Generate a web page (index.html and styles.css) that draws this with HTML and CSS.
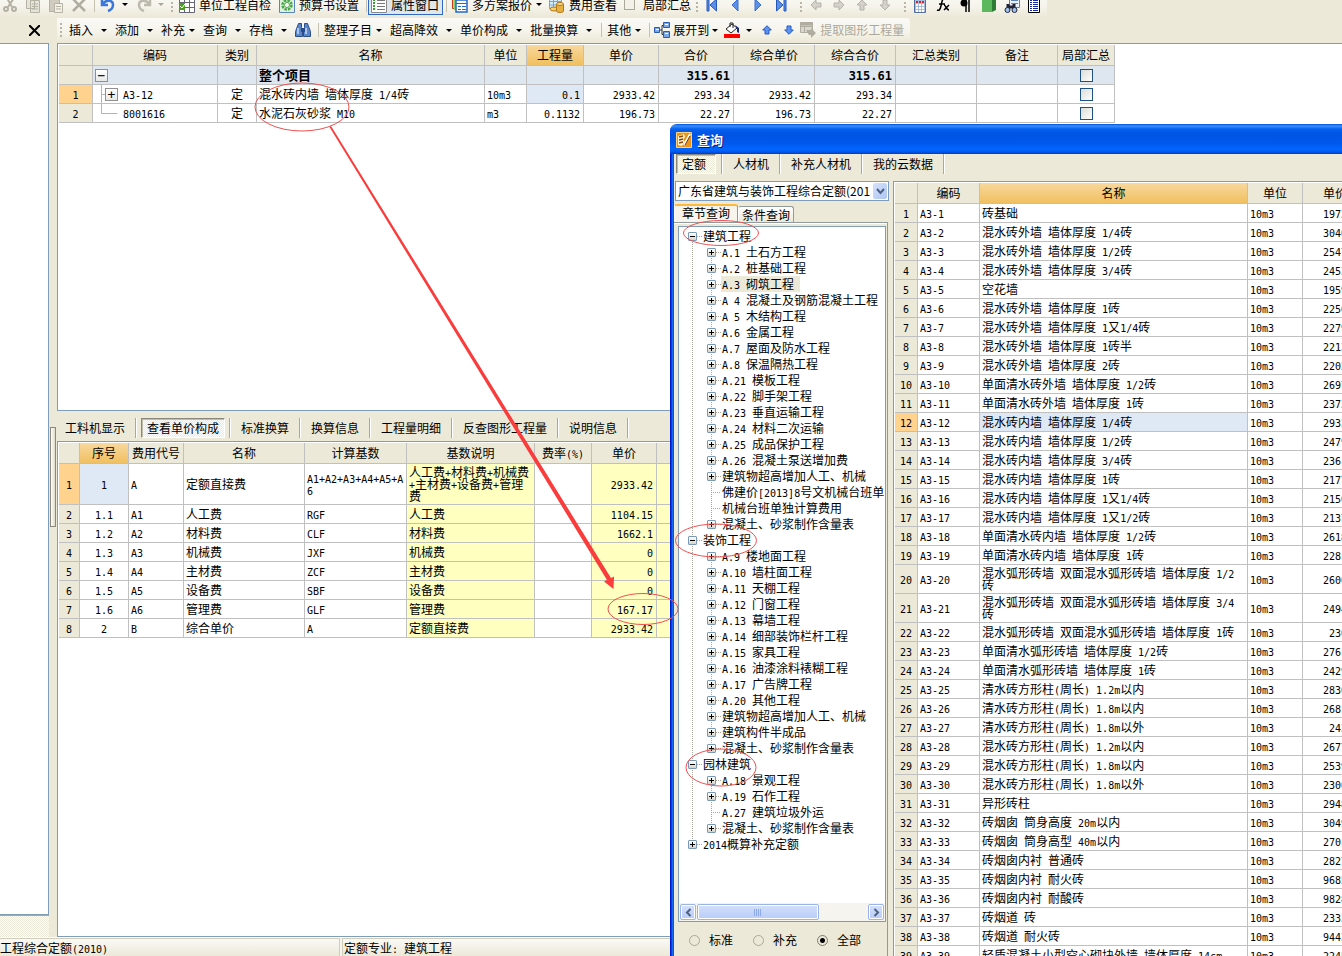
FILE: index.html
```html
<!DOCTYPE html>
<html lang="zh-CN">
<head>
<meta charset="utf-8">
<title>工程计价</title>
<link rel="stylesheet" href="styles.css">
</head>
<body>
<header class="topbar">
  <div class="strip strip-top">
    <div class="group group-edit">
      <button class="tb" aria-label="剪切"><svg width="16" height="16" viewBox="0 0 16 16" fill="none" stroke="#b5b2a4" stroke-width="2"><path d="M5 1l5 9M12 1L6 10"/><circle cx="4" cy="12" r="2"/><circle cx="12" cy="12" r="2"/></svg></button>
      <button class="tb" aria-label="复制"><svg width="16" height="16" viewBox="0 0 16 16" fill="#e6e4da" stroke="#b5b2a4"><path d="M1.500 .5h8v11h-8zM5.500 3.500h9v12h-9zM7 7h6M7 9.500h6M7 12h6"/></svg></button>
      <button class="tb" aria-label="粘贴"><svg width="16" height="16" viewBox="0 0 16 16" fill="#cfccbf" stroke="#b5b2a4"><path d="M1.500 1.500h10v13h-10z"/><path fill="#f2f0e8" d="M6.500 6.500h8v9h-8zM8 9.500h5M8 12h5"/></svg></button>
      <button class="tb" aria-label="删除"><svg width="16" height="16" viewBox="0 0 16 16" stroke="#b0ada0" stroke-width="2.500"><path d="M2 2l12 12M14 2L2 14"/></svg></button>
    </div>
    <i class="sep"></i>
    <div class="group group-undo">
      <button class="tb drop-wide" aria-label="撤销"><svg width="16" height="16" viewBox="0 0 16 16" fill="none" stroke="#3a78dc" stroke-width="2.500"><path d="M2 2v6h6M3 7c3-5 10-4 10 1 0 3-2 5-5 6"/></svg><i class="arr"></i></button>
      <button class="tb drop-wide dim" aria-label="重做"><svg width="16" height="16" viewBox="0 0 16 16" fill="none" stroke="#bdbaae" stroke-width="2.500"><path d="M14 2v6H8M13 7C10 2 3 3 3 8c0 3 2 5 5 6"/></svg><i class="arr"></i></button>
    </div>
    <i class="grip"></i>
    <div class="group group-project">
      <button class="tb"><svg width="16" height="16" viewBox="0 0 16 16"><path fill="#fff" stroke="#667" d="M.5.500h15v15H.5zM.5 5.500h15M.5 10.500h15M5.500.500v15M10.500.500v15"/><path fill="#4aa018" d="M0 6h6v7H0z"/><path d="M1 9l2 2 3-4" fill="none" stroke="#fff"/></svg>单位工程自检</button>
      <button class="tb"><svg width="16" height="16" viewBox="0 0 16 16"><path fill="#dff0dc" stroke="#5a86c0" d="M.5.500h15v15H.5z"/><circle cx="8" cy="8" r="4.500" fill="none" stroke="#4aa648" stroke-width="2.500" stroke-dasharray="2.500 1"/><circle cx="8" cy="8" r="2.500" fill="#fff" stroke="#4aa648"/></svg>预算书设置</button>
    </div>
    <i class="sep"></i>
    <button class="tb pressed-blue"><svg width="16" height="16" viewBox="0 0 16 16"><path fill="#fff" stroke="#888" d="M.5.500h15v15H.5z"/><path stroke="#35a035" stroke-width="2" stroke-dasharray="2 1" d="M3 2v12"/><path stroke="#777" d="M6 3.500h8M6 6.500h8M6 9.500h8M6 12.500h8"/></svg>属性窗口</button>
    <i class="sep"></i>
    <div class="group group-quote">
      <button class="tb drop-mid"><svg width="16" height="16" viewBox="0 0 16 16"><path fill="#f4c22c" stroke="#d23a1c" d="M.5.500h9v11h-9z"/><path fill="#7cd070" d="M2 2h9v11H2z"/><path fill="#fff" stroke="#2468c8" stroke-width="1.500" d="M4 3h11v12H4z"/><path stroke="#2468c8" d="M4 6.500h11M6 9.500h3M10 9.500h4M6 12.500h3M10 12.500h4"/></svg>多方案报价<i class="arr"></i></button>
      <button class="tb"><svg width="16" height="16" viewBox="0 0 16 16"><path fill="#d8ecfa" stroke="#6aa8d8" d="M.5.500h12v11H.5zM.5 4.500h12M.5 8h12M4.500.500v11M8.500.500v11"/><ellipse cx="5" cy="12" rx="4" ry="2" fill="#f8d068" stroke="#b07818"/><path fill="#e8b040" stroke="#b07818" d="M7.500 7v7c0 2 7 2 7 0V7z"/><ellipse cx="11" cy="7" rx="3.500" ry="1.500" fill="#fae090" stroke="#b07818"/></svg>费用查看</button>
      <label class="tb"><input class="plain-check" type="checkbox">局部汇总</label>
    </div>
    <i class="grip"></i>
    <div class="group group-nav">
      <button class="tb" aria-label="首条"><svg width="12" height="14" viewBox="0 0 12 14" fill="#5b8fe8" stroke="#2458b8"><path d="M1 1h2v12H1zM10.500 1v12L4 7z"/></svg></button>
      <button class="tb" aria-label="上一条"><svg width="12" height="14" viewBox="0 0 12 14" fill="#5b8fe8" stroke="#3a70d0"><path d="M9 1v12L3 7z"/></svg></button>
      <button class="tb" aria-label="下一条"><svg width="12" height="14" viewBox="0 0 12 14" fill="#5b8fe8" stroke="#3a70d0"><path d="M3 1v12l6-6z"/></svg></button>
      <button class="tb" aria-label="末条"><svg width="12" height="14" viewBox="0 0 12 14" fill="#5b8fe8" stroke="#2458b8"><path d="M9 1h2v12H9zM1.500 1v12L8 7z"/></svg></button>
    </div>
    <i class="grip"></i>
    <div class="group group-nav">
      <button class="tb" aria-label="左移"><svg width="12" height="12" viewBox="0 0 12 12" fill="#d4d2ca" stroke="#b5b2a8"><path d="M1 6l5-5v3h5v4H6v3z"/></svg></button>
      <button class="tb" aria-label="右移"><svg width="12" height="12" viewBox="0 0 12 12" fill="#d4d2ca" stroke="#b5b2a8"><path d="M11 6L6 1v3H1v4h5v3z"/></svg></button>
      <button class="tb" aria-label="上移"><svg width="12" height="12" viewBox="0 0 12 12" fill="#d4d2ca" stroke="#b5b2a8"><path d="M6 1l5 5H8v5H4V6H1z"/></svg></button>
      <button class="tb" aria-label="下移"><svg width="12" height="12" viewBox="0 0 12 12" fill="#d4d2ca" stroke="#b5b2a8"><path d="M6 11l5-5H8V1H4v5H1z"/></svg></button>
    </div>
    <i class="grip"></i>
    <div class="group group-tools">
      <button class="tb" aria-label="计算器"><svg width="16" height="16" viewBox="0 0 16 16"><path fill="#a8bce0" stroke="#54709c" d="M2.500.500h11v15h-11z"/><path stroke="#fff" stroke-width="2" stroke-dasharray="2 1" d="M4 8h8M4 11h8M4 14h8"/><path stroke="#d02828" stroke-width="2" stroke-dasharray="2 1" d="M4 5h8"/></svg></button>
      <button class="tb" aria-label="函数"><svg width="16" height="16" viewBox="0 0 16 16" fill="none" stroke="#000" stroke-width="1.500"><path d="M10 2C7 1 7 5 6 9s-2 5-4 4M4 7h6M9 8c2 0 2 5 5 5M14 8l-5 5"/></svg></button>
      <button class="tb" aria-label="段落"><svg width="16" height="16" viewBox="0 0 16 16"><path d="M8 2v13M11 2v13M6 2h7" fill="none" stroke="#000" stroke-width="1.500"/><circle cx="6" cy="6" r="3.500"/></svg></button>
      <button class="tb" aria-label="定额库"><svg width="16" height="16" viewBox="0 0 16 16"><path fill="#5cb85c" d="M1 3h10v12H1z"/><path fill="#2f7c34" d="M11 3l4-2v12l-4 2z"/><path fill="#9cdc9c" d="M1 3l4-2h10l-4 2z"/></svg></button>
      <button class="tb" aria-label="查找"><svg width="16" height="16" viewBox="0 0 16 16"><path fill="#e8f0fc" stroke="#6080b8" d="M5.500.500h10v10h-10zM7 3.500h7M7 6.500h7"/><path stroke="#223" stroke-width="3" d="M4 7v5M10 7v5M4 10h6"/><circle cx="3.500" cy="13" r="2.500" fill="#9cc4f4" stroke="#223"/><circle cx="10.500" cy="13" r="2.500" fill="#9cc4f4" stroke="#223"/></svg></button>
      <button class="tb" aria-label="列表"><svg width="14" height="16" viewBox="0 0 14 16"><path fill="#fff" stroke="#000" d="M1.500.500h11v15h-11z"/><path stroke="#1428a0" d="M3 3.500h2M6 3.500h5M3 5.500h2M6 5.500h5M3 7.500h2M6 7.500h5M3 9.500h2M6 9.500h5M3 11.500h2M6 11.500h5M3 13.500h2M6 13.500h5"/></svg></button>
    </div>
  </div>
</header>

<div class="workspace">
  <aside class="side">
    <div class="side-head"><button class="close" aria-label="关闭"><svg width="11" height="11" viewBox="0 0 11 11" stroke="#000" stroke-width="2"><path d="M0 0l11 11M11 0L0 11"/></svg></button></div>
    <div class="side-body"></div>
    <div class="side-foot hatch"></div>
  </aside>
  <div class="gutter"><div class="handle"></div></div>

  <main class="content">
    <div class="strip strip-main">
      <i class="grip"></i>
      <button class="tb split">插入<i class="arr"></i></button>
      <button class="tb split">添加<i class="arr"></i></button>
      <button class="tb drop">补充<i class="arr"></i></button>
      <button class="tb split">查询<i class="arr"></i></button>
      <button class="tb split">存档<i class="arr"></i></button>
      <button class="tb" aria-label="查找"><svg width="16" height="16" viewBox="0 0 16 16"><path fill="#5b86c8" stroke="#2c4f8c" d="M3.500 1.500h3v4l1 2v7h-7v-5zM9.500 1.500h3l3 8v5h-7v-7l1-2z"/><path stroke="#c8dcf8" stroke-width="1.500" d="M3 6v6M11 6v6"/><path fill="#274a88" d="M6 6h4v4H6z"/></svg></button>
      <i class="sep"></i>
      <button class="tb drop">整理子目<i class="arr"></i></button>
      <button class="tb split">超高降效<i class="arr"></i></button>
      <button class="tb split">单价构成<i class="arr"></i></button>
      <button class="tb split">批量换算<i class="arr"></i></button>
      <i class="sep"></i>
      <button class="tb drop">其他<i class="arr"></i></button>
      <i class="sep"></i>
      <button class="tb drop expand"><svg width="16" height="16" viewBox="0 0 16 16"><path fill="none" stroke="#234" d="M5 8h3M8 3.500v9M8 3.500h2M8 12.500h2"/><path fill="#7ba7ea" stroke="#2c5cb0" d="M.5 5.500h5v5h-5zM9.500.500h6v5h-6zM9.500 9.500h6v6h-6z"/><path stroke="#fff" d="M2 7.500h3M11 2.500h3M11 11.500h3"/></svg>展开到<i class="arr"></i></button>
      <button class="tb split fill" aria-label="填充颜色"><svg width="16" height="16" viewBox="0 0 16 16"><path fill="#fff" stroke="#222" d="M2 7l6-5 5 4-6 5z"/><path fill="none" stroke="#222" d="M6 5V1h3v5"/><path fill="#1a2a80" d="M11 3l4 3v5l-2-1V7z"/><path fill="#f00" d="M0 12h16v4H0z"/></svg><i class="arr"></i></button>
      <button class="tb move" aria-label="上移"><svg width="10" height="10" viewBox="0 0 10 10" fill="#5c92f0" stroke="#2458c0"><path d="M5 .7L9.300 5H7v4H3V5H.7z"/></svg></button>
      <button class="tb move" aria-label="下移"><svg width="10" height="10" viewBox="0 0 10 10" fill="#5c92f0" stroke="#2458c0"><path d="M5 9.300L9.300 5H7V1H3v4H.7z"/></svg></button>
      <button class="tb" disabled><svg width="16" height="16" viewBox="0 0 16 16"><path fill="#dad8ce" stroke="#b0ada0" d="M.5.500h12v10H.5zM.5 4.500h12M4.500 4v6"/><path fill="#b0ada0" d="M.5.500h12v3H.5zM6 8h5V6l5 5-5 5v-3H9z"/></svg>提取图形工程量</button>
    </div>

    <section class="pane pane-top">
      <table class="grid grid-items">
        <colgroup><col><col><col><col><col><col><col><col><col><col><col><col><col></colgroup>
        <thead><tr><th></th><th>编码</th><th>类别</th><th>名称</th><th>单位</th><th class="hot">工程量</th><th>单价</th><th>合价</th><th>综合单价</th><th>综合合价</th><th>汇总类别</th><th>备注</th><th>局部汇总</th></tr></thead>
        <tbody>
          <tr class="total"><td class="no"></td><td><div class="code"><button class="box root" aria-label="折叠">−</button></div></td><td></td><td>整个项目</td><td></td><td></td><td></td><td class="r">315.61</td><td></td><td class="r">315.61</td><td></td><td></td><td class="c"><input type="checkbox" aria-label="局部汇总"></td></tr>
          <tr><td class="no on">1</td><td><div class="code"><svg width="12" height="18" stroke="#b4b4b4"><path d="M8.500 0v18M8 9.500h4"/></svg><button class="box" aria-label="展开">+</button><span>A3-12</span></div></td><td class="c">定</td><td>混水砖内墙 墙体厚度 1/4砖</td><td>10m3</td><td class="r sel">0.1</td><td class="r">2933.42</td><td class="r">293.34</td><td class="r">2933.42</td><td class="r">293.34</td><td></td><td></td><td class="c"><input type="checkbox" aria-label="局部汇总"></td></tr>
          <tr><td class="no">2</td><td><div class="code"><svg width="25" height="18" stroke="#b4b4b4"><path d="M8.500 0v9.500h16" fill="none"/></svg><span>8001616</span></div></td><td class="c">定</td><td>水泥石灰砂浆 M10</td><td>m3</td><td class="r">0.1132</td><td class="r">196.73</td><td class="r">22.27</td><td class="r">196.73</td><td class="r">22.27</td><td></td><td></td><td class="c"><input type="checkbox" aria-label="局部汇总"></td></tr>
        </tbody>
      </table>
    </section>

    <nav class="tabs tabs-detail">
      <button class="tab">工料机显示</button><button class="tab active hatch">查看单价构成</button><i class="tabsep"></i><button class="tab">标准换算</button><button class="tab">换算信息</button><button class="tab">工程量明细</button><button class="tab">反查图形工程量</button><button class="tab">说明信息</button>
    </nav>

    <section class="pane pane-bottom">
      <table class="grid grid-price">
        <colgroup><col><col><col><col><col><col><col><col><col></colgroup>
        <thead><tr><th></th><th class="hot">序号</th><th>费用代号</th><th>名称</th><th>计算基数</th><th>基数说明</th><th>费率(%)</th><th>单价</th><th></th></tr></thead>
        <tbody id="price-rows"></tbody>
      </table>
    </section>
  </main>
</div>

<footer class="status"><span class="cell cell-lib">工程综合定额(2010)</span><span class="cell cell-kind">定额专业: 建筑工程</span></footer>

<section class="dialog" role="dialog" aria-labelledby="dlg-title">
  <div class="titlebar">
    <svg width="16" height="16" viewBox="0 0 16 16"><path fill="#e8951c" stroke="#ffd27a" d="M.5.500h15v15H.5z"/><path fill="#fff4d0" d="M2 4l6-2 1 3-2 3 2 1-3 5-4-1z"/><path stroke="#8c4408" fill="none" stroke-width="1.300" d="M3 5l4-1M3 8l4-1M3 11l4-1"/><path stroke="#fff" stroke-width="2" d="M14 2L8 13"/><path stroke="#7c3400" d="M14 4L9 13"/></svg>
    <h1 id="dlg-title">查询</h1>
  </div>
  <div class="dialog-body">
    <nav class="tabs tabs-dialog">
      <button class="tab active hatch">定额</button><i class="tabsep"></i><button class="tab">人材机</button><button class="tab">补充人材机</button><button class="tab">我的云数据</button>
    </nav>
    <div class="columns">
      <div class="browse">
        <div class="combo">
          <select aria-label="定额库"><option>广东省建筑与装饰工程综合定额(201</option></select>
          <span class="combo-btn"><svg width="9" height="7" viewBox="0 0 9 7" fill="none" stroke="#4d6185" stroke-width="2"><path d="M1 1l3.500 4L8 1"/></svg></span>
        </div>
        <div class="pagetabs"><button class="ptab current">章节查询</button><button class="ptab">条件查询</button></div>
        <div class="page">
          <div class="treebox">
            <ul class="tree" id="tree"></ul>
            <div class="hscroll">
              <button class="sb" aria-label="向左"><svg width="7" height="9" viewBox="0 0 7 9" fill="none" stroke="#4d6185" stroke-width="2"><path d="M5.500 1L2 4.500 5.500 8"/></svg></button>
              <div class="track"><div class="thumb"><svg width="8" height="7" stroke="#8ca8e8"><path d="M.5 0v7M2.500 0v7M4.500 0v7M6.500 0v7"/></svg></div></div>
              <button class="sb" aria-label="向右"><svg width="7" height="9" viewBox="0 0 7 9" fill="none" stroke="#4d6185" stroke-width="2"><path d="M1.500 1L5 4.500 1.500 8"/></svg></button>
            </div>
          </div>
          <div class="radios">
            <label><input type="radio" name="scope">标准</label>
            <label><input type="radio" name="scope">补充</label>
            <label><input type="radio" name="scope" checked>全部</label>
          </div>
        </div>
      </div>
      <div class="results">
        <table class="grid grid-quota">
          <colgroup><col><col><col><col><col></colgroup>
          <thead><tr><th></th><th>编码</th><th class="hot">名称</th><th>单位</th><th>单价</th></tr></thead>
          <tbody id="quota-rows"></tbody>
        </table>
      </div>
    </div>
  </div>
</section>

<svg class="marks" width="1342" height="956" viewBox="0 0 1342 956" aria-hidden="true">
  <g fill="none" stroke="#f05050">
    <ellipse cx="302" cy="107" rx="47" ry="24"/>
    <ellipse cx="643" cy="609" rx="35" ry="15.500"/>
    <ellipse cx="721" cy="233" rx="37.500" ry="12.500"/>
    <ellipse cx="716" cy="540.500" rx="40.500" ry="16.500"/>
    <ellipse cx="721" cy="767.500" rx="35" ry="18.500"/>
  </g>
  <path fill="#fa3c3c" d="M329.500 127l1.500-1L611 578l3-1.500-.5 12.500-9.500-7.500 3-1.500z"/>
</svg>
<script src="script.js"></script>
</body>
</html>
```
FILE: styles.css
```css
* { box-sizing: border-box; }
body {
  margin: 0;
  height: 100vh;
  overflow: hidden;
  display: flex;
  flex-direction: column;
  position: relative;
  background: #ece9d8;
  color: #000;
  font: 12px/14px "Noto Sans CJK SC", sans-serif;
}
button, select, input { font: inherit; color: inherit; margin: 0; }
button { border: 0; padding: 0; background: none; white-space: nowrap; }
svg { display: block; flex: none; }
.lat { font: 10px/1px "DejaVu Sans Mono", "Liberation Mono", monospace; }
.hatch { background: repeating-conic-gradient(#fff 0 25%, #ece9d8 0 50%) 0 0 / 2px 2px; }

/* toolbars */
.topbar { height: 17px; overflow: hidden; flex: none; }
.strip {
  display: flex;
  align-items: center;
  width: max-content;
  height: 24px;
  background: linear-gradient(#fbfaf7, #f5f3ea 60%, #ece9d8);
  border-radius: 0 3px 3px 0;
}
.strip-top { margin-top: -8px; height: 25px; padding-right: 6px; }
.strip-main { margin: 1px 0; padding-right: 6px; }
.group { display: flex; align-items: center; }
.group-edit { gap: 7px; padding-left: 2px; }
.group-undo { gap: 8px; padding-right: 2px; }
.group-project { gap: 8px; }
.group-quote { gap: 7px; }
.group-nav { gap: 11px; padding: 0 8px 0 2px; }
.group-tools { gap: 7px; }
.tb { display: flex; align-items: center; gap: 4px; }
.tb:disabled { color: #aca899; }
.arr { width: 5px; border: solid transparent; border-width: 3px 3px 0; border-top-color: #000; }
.dim .arr { border-top-color: #aca899; }
.drop .arr, .split .arr { margin-right: 8px; }
.split { gap: 8px; }
.drop-wide { gap: 6px; }
.expand { gap: 3px; }
.fill { gap: 6px; }
.expand .arr { margin-right: 6px; }
.fill .arr { margin-right: 4px; }
.move { margin: 0 6px; }
.sep { width: 1px; height: 14px; margin: 0 5px 0 7px; background: #c5c2b2; }
.grip { width: 2px; height: 14px; margin: 0 6px 0 5px; background: repeating-linear-gradient(#b8b5a5 0 2px, transparent 2px 4px); }
.strip-main .grip { margin: 0 7px 0 3px; }
.strip-main .drop + .sep { margin: 0 4px 0 0; }
.strip-main .split + .sep { margin-left: 1px; }
.pressed-blue { height: 20px; margin: 0 -4px 0 -4px; padding: 0 3px 0 2px; border: 1px solid #316ac5; background: #e1e6e8; }
.plain-check { appearance: none; width: 11px; height: 11px; border: 1px solid #aca899; background: #f4f2e8; margin-right: 4px; }

/* workspace */
.workspace { flex: 1; min-height: 0; display: flex; }
.side { width: 49px; flex: none; display: flex; flex-direction: column; }
.side-head { height: 26px; display: flex; align-items: center; justify-content: flex-end; padding-right: 9px; }
.side-body { flex: 1; background: #fff; border: solid #7f9db9; border-width: 1px 1px 1px 0; }
.side-foot { height: 22px; border-top: 1px solid #aca899; }
.gutter { width: 8px; flex: none; display: flex; align-items: center; justify-content: flex-start; padding-left: 1px; }
.handle { width: 6px; height: 100px; border: 1px solid #8c897c; background: linear-gradient(90deg, #fff, #dedbc8); }
.content { flex: 1; min-width: 0; display: flex; flex-direction: column; }
.pane { background: #fff; border: solid #7f9db9; border-width: 1px 0 1px 1px; padding: 1px; overflow: hidden; min-height: 0; }
.pane-top { flex: 368 1 0; }
.pane-bottom { flex: 497 1 0; }

/* button tabs */
.tabs { display: flex; align-items: center; flex: none; }
.tab { height: 20px; padding: 0 10px; border-right: 1px solid #aca899; box-shadow: 1px 0 #fff; margin-right: 1px; }
.tab.active { border: 1px solid; border-color: #8c897c #fff #fff #8c897c; box-shadow: inset 1px 1px #c0bdab; padding: 0 5px; }
.tabsep { width: 1px; height: 20px; background: #aca899; box-shadow: 1px 0 #fff; margin-right: 1px; }
.tabs-detail { height: 30px; padding: 4px 0 0 0; }
.tabs-detail .tab:first-child { padding-left: 8px; }
.tabs-detail .active { margin: 0 4px 0 4px; }
.tabs-dialog { height: 27px; padding: 0 0 7px 2px; }
.tabs-dialog .active { margin-right: 5px; padding: 0 9px 0 5px; }

/* grids */
.grid { table-layout: fixed; border-spacing: 0; line-height: 12px; }
.grid th, .grid td { padding: 0 2px; border: solid #c0c0c0; border-width: 0 1px 1px 0; overflow: hidden; }
.grid th { height: 21px; font-weight: normal; background: #ece9d8; white-space: nowrap; }
.grid td { height: 19px; text-align: left; word-break: break-all; }
.grid th.hot { background: linear-gradient(#f9d89c, #f0c060); }
.grid td.no { text-align: center; background: #ece9d8; padding: 0; }
.grid td.on { background: #ffd28e; }
.grid td.sel { background: #dfe9f5; }
.grid td.r { text-align: right; padding-right: 3px; }
.grid td.c { text-align: center; }
.grid td.y { background: #ffffc0; }
.grid .total td { background: #dee6f0; font-size: 13px; font-weight: bold; }
.grid .total td.no { background: #ece9d8; }
.total .lat { font-size: 12px; font-weight: bold; }
.grid input { appearance: none; display: block; width: 13px; height: 13px; margin: 0 auto; border: 1px solid #1c5180; background: linear-gradient(135deg, #dcdcd7, #fff); }
.code { display: flex; align-items: center; height: 18px; margin: 0 -2px; }
.code > span { margin-left: 5px; }
.box { width: 13px; height: 13px; border: 1px solid #909090; background: linear-gradient(#fff, #e8e8e8); font: 13px/11px "DejaVu Sans Mono", monospace; }
.box.root { margin-left: 2px; font-weight: normal; }
.grid-items { width: 1056px; }
.grid-items col:nth-child(1) { width: 34px; }
.grid-items col:nth-child(2) { width: 125px; }
.grid-items col:nth-child(3) { width: 39px; }
.grid-items col:nth-child(4) { width: 228px; }
.grid-items col:nth-child(5) { width: 42px; }
.grid-items col:nth-child(6), .grid-items col:nth-child(13) { width: 57px; }
.grid-items col:nth-child(7), .grid-items col:nth-child(8) { width: 75px; }
.grid-items col:nth-child(n+9):nth-child(-n+12) { width: 81px; }
.grid-price { width: 678px; }
.grid-price col:nth-child(1) { width: 21px; }
.grid-price col:nth-child(2) { width: 49px; }
.grid-price col:nth-child(3) { width: 55px; }
.grid-price col:nth-child(4) { width: 121px; }
.grid-price col:nth-child(5) { width: 102px; }
.grid-price col:nth-child(6) { width: 128px; }
.grid-price col:nth-child(7) { width: 57px; }
.grid-price col:nth-child(8) { width: 65px; }
.grid-price col:nth-child(9) { width: 80px; }
.grid-price tbody tr:first-child td { height: 41px; }
.grid-quota { width: 473px; }
.grid-quota col:nth-child(1) { width: 23px; }
.grid-quota col:nth-child(2) { width: 62px; }
.grid-quota col:nth-child(3) { width: 268px; }
.grid-quota col:nth-child(4) { width: 55px; }
.grid-quota col:nth-child(5) { width: 65px; }
.grid-quota .tall td { height: 29px; }
.grid-quota td.price { white-space: pre; padding-left: 20px; }

/* status bar */
.status { flex: none; height: 19px; display: flex; gap: 2px; border-top: 1px solid #fff; background: #f6f4ec; }
.cell { padding-top: 2px; line-height: 14px; border: solid #d0cdbd; border-width: 1px 1px 0 0; background: linear-gradient(#faf9f5, #ece9d8); }
.cell-lib { width: 340px; }
.cell-kind { flex: 1; border-left-width: 1px; padding-left: 1px; }

/* lookup window */
.dialog {
  position: absolute;
  left: 670px;
  top: 124px;
  right: 0;
  bottom: 0;
  display: flex;
  flex-direction: column;
  overflow: hidden;
  border-radius: 7px 0 0 0;
  background: linear-gradient(90deg, #0019cf 0 1px, #0a3fdc 1px 2px, #1668ee 2px 3px, #0855dd 3px 4px, #ece9d8 4px);
}
.titlebar {
  height: 30px;
  flex: none;
  display: flex;
  align-items: center;
  gap: 5px;
  padding: 1px 0 0 6px;
  background: linear-gradient(#0050d8 0, #3a90ff 2px, #0560f0 5px, #0054e3 10px, #0057ea 18px, #0066ff 25px, #0060f8 27px, #003cc8 30px);
}
.titlebar h1 { margin: 0; font-size: 13px; line-height: 16px; color: #fff; text-shadow: 1px 1px #0a1883; }
.dialog-body { flex: 1; min-height: 0; margin-left: 4px; display: flex; flex-direction: column; }
.columns { flex: 1; min-height: 0; display: flex; gap: 4px; }
.browse { width: 215px; flex: none; display: flex; flex-direction: column; }
.combo { position: relative; height: 20px; margin-left: 1px; background: #fff; border: 1px solid #7f9db9; }
.combo select { appearance: none; display: block; width: 100%; height: 18px; padding: 0 17px 0 2px; border: 0; background: none; }
.combo-btn { position: absolute; right: 0; top: 0; width: 16px; height: 18px; display: flex; align-items: center; justify-content: center; border: 1px solid #fff; border-radius: 3px; background: linear-gradient(135deg, #d6e2fc, #aec4f2); pointer-events: none; }
.pagetabs { display: flex; align-items: flex-end; height: 21px; }
.ptab { height: 16px; padding: 0 3px; border: 1px solid #919b9c; border-bottom: 0; border-left-color: #fff; border-radius: 3px 3px 0 0; background: linear-gradient(#fff, #ece9d8); line-height: 14px; }
.ptab.current { height: 18px; padding: 0 7px 2px; border-top: 2px solid #ffb83c; background: #f6f4ec; }
.page { flex: 1; min-height: 0; margin-right: 1px; display: flex; flex-direction: column; border: solid #919b9c; border-width: 1px 1px 0 0; box-shadow: inset 0 1px #fff; padding: 3px 1px 0 4px; }
.treebox { flex: 1; min-height: 0; display: flex; flex-direction: column; overflow: hidden; border: 1px solid #7f9db9; background: #fff; }
.tree { flex: 1; overflow: hidden; padding-top: 1px; }
ul { list-style: none; margin: 0; padding: 0; }
.level { background: repeating-linear-gradient(#a8a59a 0 1px, transparent 1px 2px) 13px 8px / 1px calc(100% - 16px) no-repeat; }
.level .level { margin-left: 19px; }
.node { display: flex; align-items: center; height: 16px; padding-left: 9px; white-space: nowrap; }
.exp { width: 9px; height: 9px; flex: none; border: 1px solid #7a98b8; border-radius: 1px; background: linear-gradient(#fff, #d8d4c4); display: grid; place-items: center; }
.dots { width: 5px; height: 1px; flex: none; background: repeating-linear-gradient(90deg, #a8a59a 0 1px, transparent 1px 2px); }
.leaf .dots { width: 10px; margin-left: 4px; }
.label { padding: 0 6px 0 1px; line-height: 16px; }
.label.picked { background: #ece9d8; }
.hscroll { flex: none; height: 18px; display: flex; padding: 1px; background: #f5f4ee; }
.sb, .thumb { border: 1px solid #9ab4ea; border-radius: 2px; box-shadow: inset 0 0 0 1px #fff; background: linear-gradient(#d4e0fc, #b8ccf8); display: flex; align-items: center; justify-content: center; }
.sb { width: 16px; flex: none; }
.track { flex: 1; display: flex; padding: 0 1px; }
.thumb { width: 72%; }
.radios { height: 34px; flex: none; display: flex; align-items: center; gap: 20px; padding: 2px 0 0 11px; }
.radios label { display: flex; align-items: center; gap: 9px; }
.radios input { appearance: none; width: 11px; height: 11px; border: 1px solid #aca899; border-radius: 50%; }
.radios input:checked { border-color: #7c7a70; background: radial-gradient(#000 0 2px, transparent 3px); }
.results { flex: 1; min-width: 0; overflow: hidden; background: #fff; border: solid #7f9db9; border-width: 1px 0 0 1px; padding: 1px; }

/* annotations drawn above every window */
.marks { position: absolute; left: 0; top: 0; pointer-events: none; }
```
FILE: script.js
```js
const priceRows = [
  ['1', 'A', '定额直接费', 'A1+A2+A3+A4+A5+A6', '人工费+材料费+机械费+主材费+设备费+管理费', '2933.42'],
  ['1.1', 'A1', '人工费', 'RGF', '人工费', '1104.15'],
  ['1.2', 'A2', '材料费', 'CLF', '材料费', '1662.1'],
  ['1.3', 'A3', '机械费', 'JXF', '机械费', '0'],
  ['1.4', 'A4', '主材费', 'ZCF', '主材费', '0'],
  ['1.5', 'A5', '设备费', 'SBF', '设备费', '0'],
  ['1.6', 'A6', '管理费', 'GLF', '管理费', '167.17'],
  ['2', 'B', '综合单价', 'A', '定额直接费', '2933.42']
];
document.getElementById('price-rows').innerHTML = priceRows.map((r, i) =>
  `<tr><td class="no${i ? '' : ' on'}">${i + 1}</td><td class="c${i ? '' : ' sel'}">${r[0]}</td><td>${r[1]}</td><td>${r[2]}</td><td>${r[3]}</td><td class="y">${r[4]}</td><td></td><td class="r y">${r[5]}</td><td class="y"></td></tr>`
).join('');

const quotas = [
  ['砖基础', '1973'],
  ['混水砖外墙 墙体厚度 1/4砖', '3040'],
  ['混水砖外墙 墙体厚度 1/2砖', '2547'],
  ['混水砖外墙 墙体厚度 3/4砖', '2453'],
  ['空花墙', '1959'],
  ['混水砖外墙 墙体厚度 1砖', '2250'],
  ['混水砖外墙 墙体厚度 1又1/4砖', '2279'],
  ['混水砖外墙 墙体厚度 1砖半', '2213'],
  ['混水砖外墙 墙体厚度 2砖', '2202'],
  ['单面清水砖外墙 墙体厚度 1/2砖', '2697'],
  ['单面清水砖外墙 墙体厚度 1砖', '2373'],
  ['混水砖内墙 墙体厚度 1/4砖', '2933'],
  ['混水砖内墙 墙体厚度 1/2砖', '2479'],
  ['混水砖内墙 墙体厚度 3/4砖', '236'],
  ['混水砖内墙 墙体厚度 1砖', '2177'],
  ['混水砖内墙 墙体厚度 1又1/4砖', '2150'],
  ['混水砖内墙 墙体厚度 1又1/2砖', '2137'],
  ['单面清水砖内墙 墙体厚度 1/2砖', '2618'],
  ['单面清水砖内墙 墙体厚度 1砖', '228'],
  ['混水弧形砖墙 双面混水弧形砖墙 墙体厚度 1/2砖', '2600'],
  ['混水弧形砖墙 双面混水弧形砖墙 墙体厚度 3/4砖', '2494'],
  ['混水弧形砖墙 双面混水弧形砖墙 墙体厚度 1砖', ' 230'],
  ['单面清水弧形砖墙 墙体厚度 1/2砖', '276'],
  ['单面清水弧形砖墙 墙体厚度 1砖', '2429'],
  ['清水砖方形柱(周长) 1.2m以内', '2830'],
  ['清水砖方形柱(周长) 1.8m以内', '268'],
  ['清水砖方形柱(周长) 1.8m以外', ' 243'],
  ['混水砖方形柱(周长) 1.2m以内', '2677'],
  ['混水砖方形柱(周长) 1.8m以内', '2539'],
  ['混水砖方形柱(周长) 1.8m以外', '2300'],
  ['异形砖柱', '2948'],
  ['砖烟囱 筒身高度 20m以内', '3049'],
  ['砖烟囱 筒身高型 40m以内', '270'],
  ['砖烟囱内衬 普通砖', '2827'],
  ['砖烟囱内衬 耐火砖', '9685'],
  ['砖烟囱内衬 耐酸砖', '9828'],
  ['砖烟道 砖', '2332'],
  ['砖烟道 耐火砖', '9443'],
  ['轻质混凝土小型空心砌块外墙 墙体厚度 14cm', '2245']
];
document.getElementById('quota-rows').innerHTML = quotas.map((q, i) => {
  const n = i + 1;
  const on = n === 12;
  return `<tr${n === 20 || n === 21 ? ' class="tall"' : ''}><td class="no${on ? ' on' : ''}">${n}</td><td>A3-${n}</td><td${on ? ' class="sel"' : ''}>${q[0]}</td><td>10m3</td><td class="price">${q[1]}</td></tr>`;
}).join('');

// A leading "-" marks an entry without children.
const chapters = [
  ['建筑工程', ['A.1 土石方工程', 'A.2 桩基础工程', 'A.3 砌筑工程', 'A 4 混凝土及钢筋混凝土工程', 'A 5 木结构工程', 'A.6 金属工程', 'A.7 屋面及防水工程', 'A.8 保温隔热工程', 'A.21 模板工程', 'A.22 脚手架工程', 'A.23 垂直运输工程', 'A.24 材料二次运输', 'A.25 成品保护工程', 'A.26 混凝土泵送增加费', '建筑物超高增加人工、机械', '-佛建价[2013]8号文机械台班单', '-机械台班单独计算费用', '混凝土、砂浆制作含量表']],
  ['装饰工程', ['A.9 楼地面工程', 'A.10 墙柱面工程', 'A.11 天棚工程', 'A.12 门窗工程', 'A.13 幕墙工程', 'A.14 细部装饰栏杆工程', 'A.15 家具工程', 'A.16 油漆涂料裱糊工程', 'A.17 广告牌工程', 'A.20 其他工程', '建筑物超高增加人工、机械', '建筑构件半成品', '混凝土、砂浆制作含量表']],
  ['园林建筑', ['A.18 景观工程', 'A.19 石作工程', '-A.27 建筑垃圾外运', '混凝土、砂浆制作含量表']],
  ['2014概算补充定额', null]
];
const expander = open => `<button class="exp" aria-label="${open ? '折叠' : '展开'}"><svg width="5" height="5" stroke="#000"><path d="M0 2.5h5${open ? '' : 'M2.5 0v5'}"/></svg></button>`;
const node = (text, open) => {
  const leaf = text[0] === '-';
  const name = leaf ? text.slice(1) : text;
  return `<div class="node${leaf ? ' leaf' : ''}">${leaf ? '' : expander(open)}<i class="dots"></i><span class="label${name.startsWith('A.3 ') ? ' picked' : ''}">${name}</span></div>`;
};
document.getElementById('tree').innerHTML = '<li><ul class="level">' + chapters.map(([name, kids]) =>
  `<li>${node(name, !!kids)}${kids ? '<ul class="level">' + kids.map(k => `<li>${node(k, false)}</li>`).join('') + '</ul>' : ''}</li>`
).join('') + '</ul></li>';

// Latin runs are set in the half-width face so two of them span one ideograph.
const walker = document.createTreeWalker(document.body, NodeFilter.SHOW_TEXT);
const texts = [];
while (walker.nextNode()) {
  const t = walker.currentNode;
  if (t.data.trim() && !t.parentNode.closest('script, option, .box') && /[\x20-\x7e]/.test(t.data)) texts.push(t);
}
texts.forEach(t => {
  const parts = document.createDocumentFragment();
  t.data.split(/([\x20-\x7e]+)/).forEach(s => {
    if (!s) return;
    if (/^[\x20-\x7e]/.test(s)) {
      const span = document.createElement('span');
      span.className = 'lat';
      span.textContent = s;
      parts.append(span);
    } else parts.append(s);
  });
  t.replaceWith(parts);
});
```
